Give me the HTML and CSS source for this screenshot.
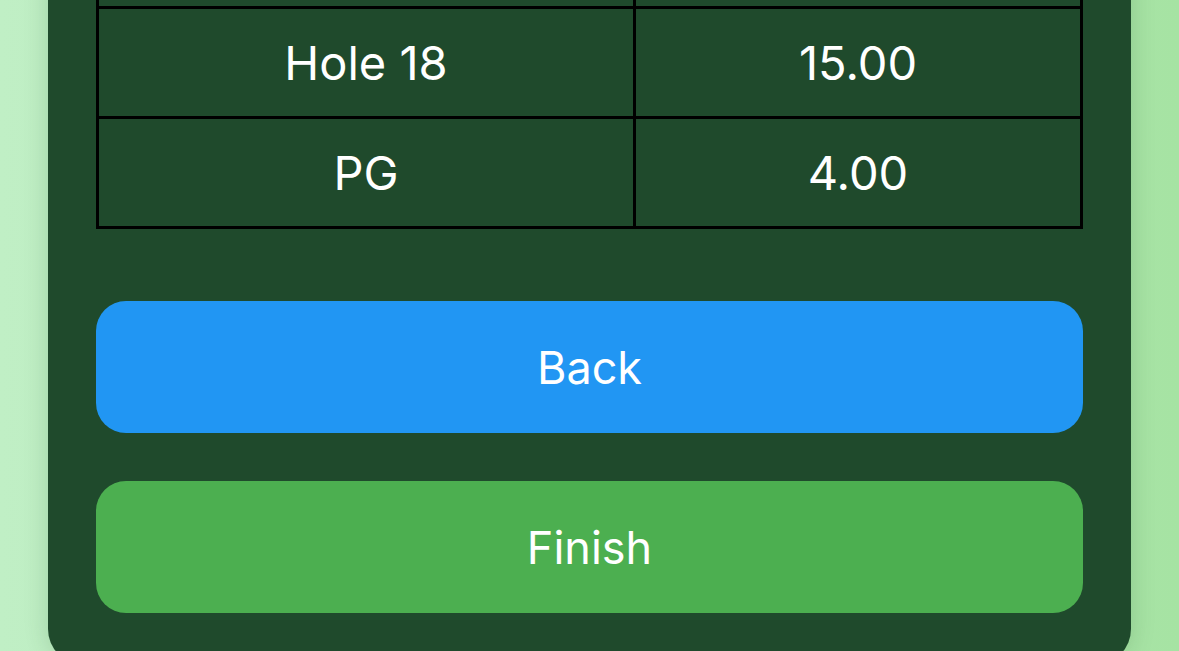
FILE: index.html
```html
<!DOCTYPE html>
<html lang="en">
<head>
    <meta charset="UTF-8">
    <meta name="viewport" content="width=device-width, initial-scale=1.0">
    <title>Scorecard</title>
    <link rel="stylesheet" href="styles.css">
</head>
<body>
    <div class="card">
        <table class="score-table">
            <tbody>
                <!-- previous row, scrolled above the view -->
                <tr class="prev">
                    <td></td>
                    <td></td>
                </tr>
                <tr>
                    <td>Hole 18</td>
                    <td>15.00</td>
                </tr>
                <tr>
                    <td>PG</td>
                    <td>4.00</td>
                </tr>
            </tbody>
        </table>
        <div class="actions">
            <button class="btn back">Back</button>
            <button class="btn finish">Finish</button>
        </div>
    </div>
</body>
</html>
```

FILE: styles.css
```css
body {
    margin: 0;
    background: linear-gradient(90deg, #c0efc5 0%, #b6e8bb 40%, #a6e3a3 100%);
    font-family: Inter, 'Noto Sans', sans-serif;
    color: #fff;
    overflow: hidden;
}

.card {
    width: 987px;
    margin: -104px auto 0;
    padding: 0 48px 52px;
    background: #1f4a2c;
    border-radius: 0 0 36px 36px;
    box-shadow: 0 0 24px rgba(20, 70, 30, 0.18);
}

/* table */
.score-table {
    width: 100%;
    border-collapse: collapse;
    table-layout: fixed;
}
.score-table td {
    height: 107px;
    padding: 0;
    border: 3px solid #000;
    text-align: center;
    font-size: 47px;
    font-weight: 400;
}
.score-table td:first-child { width: 534px; }

/* buttons */
.actions {
    display: flex;
    flex-direction: column;
    gap: 48px;
    margin-top: 72px;
}
.btn {
    height: 132px;
    border: none;
    border-radius: 30px;
    color: #fff;
    font-family: inherit;
    font-size: 45px;
    cursor: pointer;
}
.back { background: #2196f3; }
.finish { background: #4caf50; }
```
